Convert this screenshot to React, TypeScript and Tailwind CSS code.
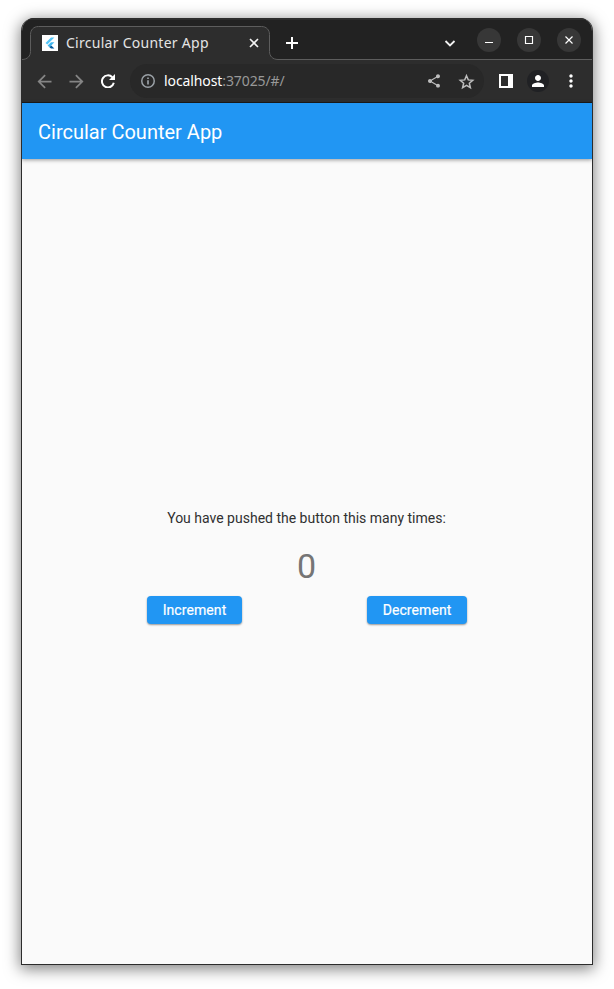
import { useState } from "react";
import { MdArrowBack, MdArrowForward, MdMoreVert, MdPerson, MdShare } from "react-icons/md";

function FlutterLogo() {
  return (
    <svg className="h-4 w-4 shrink-0" viewBox="0 0 16 16">
      <rect width="16" height="16" fill="#fff" />
      <path d="M9 2.5h3.4L5.3 9.6 3.5 7.9z" fill="#54c5f8" />
      <path d="M9 7.3h3.4L9.2 10.5l-1.8 1.7-1.8-1.8z" fill="#40b6ee" />
      <path d="M7.4 12.2l1.8-1.7 3.2 3.1H9z" fill="#01579b" />
    </svg>
  );
}

function TabStrip() {
  return (
    <div className="relative flex h-[42px] shrink-0 bg-[#222222] shadow-[inset_0_2px_#2f2f2f]">
      <svg className="absolute left-0 top-0 h-[42px] w-[570px]" viewBox="0 0 570 42" fill="none">
        <path
          d="M0 42V41.5C5.500 41.500 8.500 38 8.500 33.500V16.500C8.500 12 11.500 8.500 16.500 8.500H239.500C244.500 8.500 247.500 12 247.500 16.500V33.500C247.500 38 250.500 41.500 256 41.500H570V42Z"
          fill="#2d2d2d"
        />
        <path
          d="M0 41.500C5.500 41.500 8.500 38 8.500 33.500V16.500C8.500 12 11.500 8.500 16.500 8.500H239.500C244.500 8.500 247.500 12 247.500 16.500V33.500C247.500 38 250.500 41.500 256 41.500H570"
          stroke="#5d5d5d"
        />
      </svg>
      <div className="relative mt-[9px] flex h-8 w-[248px] items-center pl-5">
        <FlutterLogo />
        <span className="ml-2 w-[182px] whitespace-nowrap font-['Noto_Sans',sans-serif] text-[14px] leading-none tracking-[0.27px] text-[#e4e4e4]">
          Circular Counter App
        </span>
        <svg className="h-3 w-3 shrink-0" viewBox="0 0 12 12" stroke="#f2f2f2" strokeWidth="1.6">
          <path d="M2 2l8 8M10 2l-8 8" />
        </svg>
      </div>
      <svg className="relative ml-4 mt-[19px] h-3 w-3" viewBox="0 0 12 12" fill="#fff">
        <path d="M5 0h2v5h5v2H7v5H5V7H0V5h5z" />
      </svg>
      <svg className="relative ml-[146px] mt-[19px] h-3 w-3" viewBox="0 0 12 12" fill="none" stroke="#f0f0f0" strokeWidth="1.8">
        <path d="M1.500 4l4.500 4.500L10.500 4" />
      </svg>
      <div className="relative ml-[21px] mt-[10px] flex gap-4">
        {["M8 14.500h8", "M8.500 8.500h7v7h-7z", "M8.500 8.500l7 7M15.500 8.500l-7 7"].map((d) => (
          <button key={d} className="h-6 w-6 rounded-full bg-[#373737]">
            <svg className="h-6 w-6" viewBox="0 0 24 24" fill="none" stroke="#fff" strokeWidth="1.15">
              <path d={d} />
            </svg>
          </button>
        ))}
      </div>
    </div>
  );
}

function Toolbar() {
  return (
    <div className="flex h-[43px] shrink-0 items-center border-b border-[#1b1b1b] bg-[#2d2d2d] pl-[11.5px] text-white">
      <MdArrowBack size={21} className="text-[#858585]" />
      <MdArrowForward size={21} className="ml-[11px] text-[#858585]" />
      <svg className="ml-[14.5px] h-[14px] w-[14px]" viewBox="0 0 14 14" fill="none">
        <path d="M11.300 3.200A6 6 0 1 0 12.800 8.800" stroke="#fff" strokeWidth="2" />
        <path d="M14 0v6H8z" fill="#fff" />
      </svg>
      <div className="ml-[15px] flex h-[34px] w-[354px] items-center rounded-full bg-[#282828] pl-[11px]">
        <svg className="h-[14px] w-[14px]" viewBox="0 0 14 14" fill="none" stroke="#9aa0a6" strokeWidth="1.5">
          <circle cx="7" cy="7" r="6.250" />
          <path d="M7 6.200v4.300M7 3.500V5" strokeWidth="1.7" />
        </svg>
        <span className="ml-[9px] w-[262px] whitespace-nowrap font-['Noto_Sans',sans-serif] text-[14px] leading-none tracking-[-0.1px] text-[#989898]">
          <span className="text-white">localhost</span>:37025/#/
        </span>
        <MdShare size={16} className="text-[#bdbdbd]" />
        <svg className="ml-[15.5px] h-[17px] w-[17px]" viewBox="0 0 24 24" fill="none" stroke="#bdbdbd" strokeWidth="2.1">
          <path d="M12 3.800l2.500 5.900 6.400.6-4.900 4.200 1.500 6.300-5.500-3.400-5.500 3.400L8 14.500l-4.900-4.200 6.400-.6z" />
        </svg>
      </div>
      <svg className="ml-[15px] h-[14px] w-[14px]" viewBox="0 0 14 14" fill="#fff">
        <path fillRule="evenodd" d="M0 0h14v14H0zM2 2v10h7V2z" />
      </svg>
      <div className="ml-[14px] flex h-[22px] w-[22px] items-center justify-center rounded-full bg-[#202124]">
        <MdPerson size={18} />
      </div>
      <MdMoreVert size={20} className="ml-[11.5px]" />
    </div>
  );
}

const buttonClass =
  "h-7 rounded bg-[#2196f3] pt-px text-[14px] tracking-[0.08px] text-white shadow-[0_1px_2px_rgba(0,0,0,0.4)] [-webkit-text-stroke:0.2px_white]";

export default function App() {
  const [count, setCount] = useState(0);
  return (
    <div className="h-[989px] w-[614px] overflow-hidden bg-white pl-[21px] pt-[18px]">
      <div className="flex h-[947px] w-[572px] flex-col overflow-hidden rounded-t-[13px] border border-t-0 border-[#2c2c2c] bg-[#fafafa] shadow-[0_3px_15px_1px_rgba(0,0,0,0.5)]">
        <TabStrip />
        <Toolbar />
        <header className="relative flex h-14 shrink-0 items-center bg-[#2196f3] pl-4 pt-px font-[Roboto,sans-serif] text-[20px] text-white shadow-[0_1px_4px_rgba(0,0,0,0.4)]">
          Circular Counter App
        </header>
        <main className="flex flex-1 flex-col items-center pt-[350px] font-[Roboto,sans-serif]">
          <p className="mr-px text-[14px] leading-[18px] text-[#303030]">You have pushed the button this many times:</p>
          <p className="mr-px mt-[19px] text-[34px] leading-[40px] text-[#757575]">{count}</p>
          <div className="mt-[9.5px] flex w-[320px] justify-between">
            <button className={`w-[95px] ${buttonClass}`} onClick={() => setCount(count + 1)}>Increment</button>
            <button className={`w-[100px] ${buttonClass}`} onClick={() => setCount(count - 1)}>Decrement</button>
          </div>
        </main>
      </div>
    </div>
  );
}
